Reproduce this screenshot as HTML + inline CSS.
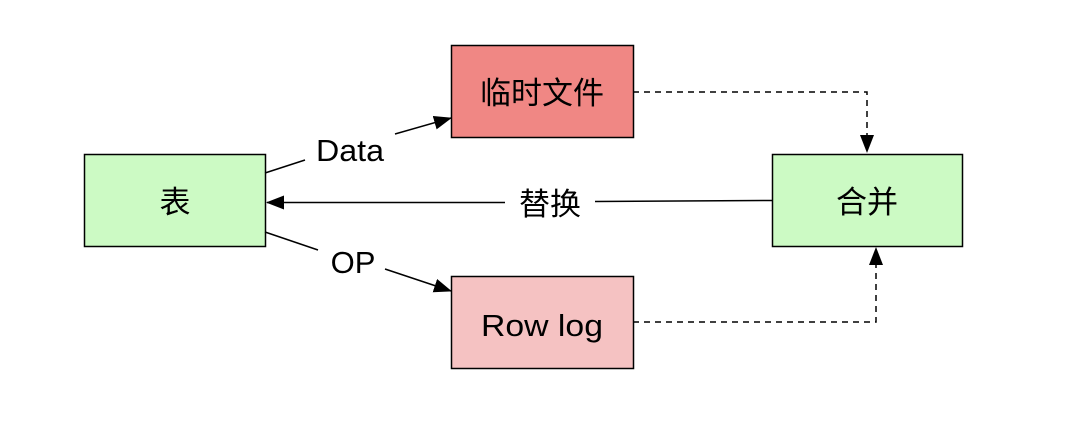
<!DOCTYPE html>
<html><head><meta charset="utf-8"><style>
html,body{margin:0;padding:0;background:#fff;width:1076px;height:436px;overflow:hidden}
svg text{font-family:"Liberation Sans","Noto Sans CJK SC",sans-serif;font-size:31px;fill:#000}
svg text.c{font-size:31px}
</style></head><body>
<svg width="1076" height="436" viewBox="0 0 1076 436" xmlns="http://www.w3.org/2000/svg">
<defs><marker id="b" markerWidth="18" markerHeight="14" refX="17" refY="7" orient="auto" markerUnits="userSpaceOnUse"><path d="M0,0 L18,7 L0,14 Z" fill="#000"/></marker></defs>
<rect x="84.5" y="154.5" width="181" height="92" fill="#CCFAC4" stroke="#000" stroke-width="1.5"/>
<rect x="451.5" y="45.5" width="182" height="92" fill="#F08784" stroke="#000" stroke-width="1.5"/>
<rect x="451.5" y="276.5" width="182" height="92" fill="#F5C2C2" stroke="#000" stroke-width="1.5"/>
<rect x="772.5" y="154.5" width="190" height="92" fill="#CCFAC4" stroke="#000" stroke-width="1.5"/>
<text class="c" x="175" y="213" text-anchor="middle">表</text>
<text class="c" x="542" y="104" text-anchor="middle">临时文件</text>
<text x="542" y="336" text-anchor="middle" textLength="122" lengthAdjust="spacingAndGlyphs">Row log</text>
<text class="c" x="867" y="213" text-anchor="middle">合并</text>
<g stroke="#000" stroke-width="1.5" fill="none">
<path d="M633,92 H867 V152" stroke-dasharray="6,5" marker-end="url(#b)"/>
<path d="M633,322 H876 V248" stroke-dasharray="6,5" marker-end="url(#b)"/>
<path d="M505,202.5 H267" marker-end="url(#b)"/>
<path d="M772,200.5 L595,201.5"/>
<path d="M265,173 L305,160"/>
<path d="M395,134 L451,118" marker-end="url(#b)"/>
<path d="M265,232 L318,250"/>
<path d="M385,269 L451,291" marker-end="url(#b)"/>
</g>
<text class="c" x="550" y="215" text-anchor="middle">替换</text>
<text x="350" y="161" text-anchor="middle" textLength="68" lengthAdjust="spacingAndGlyphs">Data</text>
<text x="353" y="273" text-anchor="middle">OP</text>
</svg>
</body></html>
